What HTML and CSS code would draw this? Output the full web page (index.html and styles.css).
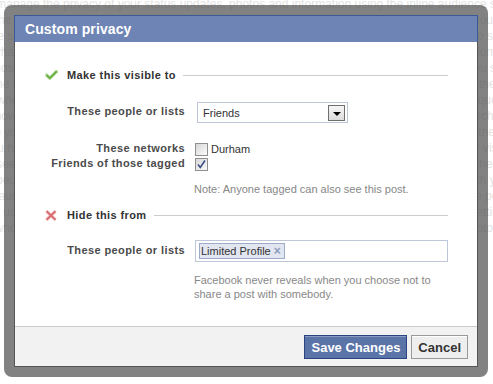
FILE: index.html
```html
<html>

<head>
    <meta http-equiv="Content-Type" content="text/html; charset=utf-8">
    <title>Custom privacy</title>

    <link rel="stylesheet" href="styles.css">
</head>

<body>
    <!-- page behind the dialog -->
    <div class="page">
        <p>You can manage the privacy of your status updates, photos and information using the inline audience selector when you share.</p>
        <p>Choose the people who see the things you share, and change it later for any post on your profile if you care.</p>
        <p>Use these settings to customize who can see each post, and remember that people you tag can also see them.</p>
        <p>Control what gets shared when you connect with applications, games and websites that use your information.</p>
        <p>Your friends can see posts you share with them, and the people you tag may be able to see what you share.</p>
        <p>Review the posts and photos you are tagged in before they appear on your profile and timeline for others.</p>
        <p>Manage who can look you up by email address and phone number, and who can send you friend requests.</p>
        <p>Choose how you connect with the people you know and control what others can see when they search for you.</p>
        <p>Lists help you share with smaller groups of people, and you can change who is on a list at any time there.</p>
        <p>When you hide a post from someone it will not show on their news feed or on your profile when they visit it.</p>
        <p>You can see how your profile looks to the public or to a specific friend using the preview tool above there.</p>
        <p>Blocked people can no longer see things you post on your profile, tag you, or start conversations with you.</p>
        <p>Limit the audience for posts you have shared with friends of friends or the public on your old timeline posts.</p>
        <p>Apps you use may ask for access to your information, and you can remove any of them from your settings page.</p>
        <p>Choose who can post on your profile and who can see what others post on your profile and your photo albums.</p>
    </div>

    <!-- custom privacy dialog -->
    <div class="overlay">
        <div class="dialog">
            <div class="dialog-head">Custom privacy</div>

            <div class="dialog-body">
                <div class="section-title">
                    <svg class="icon" width="13" height="10" viewBox="0 0 13 10">
                        <path d="M1.5 5 L4.8 8.2 L11.8 1.2" fill="none" stroke="#c9e4b4" stroke-width="3.6" stroke-linecap="square"/>
                        <path d="M1.5 5 L4.8 8.2 L11.8 1.2" fill="none" stroke="#6aaf42" stroke-width="2"/>
                    </svg>
                    <span>Make this visible to</span>
                    <i class="rule"></i>
                </div>

                <div class="row row-select">
                    <span class="lbl">These people or lists</span>
                    <div class="select">
                        <span>Friends</span>
                        <span class="select-btn"><i class="caret"></i></span>
                    </div>
                </div>

                <div class="row row-check first">
                    <span class="lbl">These networks</span>
                    <div class="check-line"><span class="cb"></span><span>Durham</span></div>
                </div>
                <div class="row row-check">
                    <span class="lbl">Friends of those tagged</span>
                    <div class="check-line">
                        <span class="cb">
                            <svg width="11" height="11" viewBox="0 0 11 11">
                                <path d="M2 5.5 L4.3 8.5 L9 1.5" fill="none" stroke="#3b4f86" stroke-width="1.6"/>
                            </svg>
                        </span>
                    </div>
                </div>

                <p class="note">Note: Anyone tagged can also see this post.</p>

                <div class="section-title hide">
                    <svg class="icon" width="12" height="11" viewBox="0 0 12 11">
                        <path d="M1.5 1.2 L10.5 9.8 M10.5 1.2 L1.5 9.8" fill="none" stroke="#f4c7c8" stroke-width="3.6"/>
                        <path d="M1.5 1.2 L10.5 9.8 M10.5 1.2 L1.5 9.8" fill="none" stroke="#d6696d" stroke-width="1.8"/>
                    </svg>
                    <span>Hide this from</span>
                    <i class="rule"></i>
                </div>

                <div class="row row-token">
                    <span class="lbl">These people or lists</span>
                    <div class="token-input">
                        <span class="token">Limited Profile<b class="token-x">×</b></span>
                    </div>
                </div>

                <p class="note note-wide">Facebook never reveals when you choose not to share a post with somebody.</p>
            </div>

            <div class="dialog-foot">
                <button class="btn btn-blue">Save Changes</button>
                <button class="btn">Cancel</button>
            </div>
        </div>
    </div>
</body>

</html>
```

FILE: styles.css
```css
body {
    margin: 0;
    width: 493px;
    height: 384px;
    overflow: hidden;
    position: relative;
    background: #fff;
    font-family: "Liberation Sans", Arial, sans-serif;
    font-size: 11px;
    color: #333;
}

/* faded page behind */
.page {
    margin: -4px 0 0 -50px;
    font-size: 12px;
    line-height: 16px;
    color: #e3e3e3;
    white-space: nowrap;
}

.page p {
    margin: 0;
}

.overlay {
    position: absolute;
    left: 4px;
    top: 5px;
    width: 484px;
    height: 372px;
    box-sizing: border-box;
    padding: 10px;
    border-radius: 8px;
    background: rgba(82, 82, 82, .72);
}

.dialog {
    height: 100%;
    box-sizing: border-box;
    border: 1px solid #555;
    background: #fff;
    display: flex;
    flex-direction: column;
}

.dialog-head {
    margin: -1px -1px 0;
    height: 26px;
    line-height: 26px;
    padding-left: 10px;
    border: 1px solid #3b5998;
    border-bottom: 0;
    background: #6d84b4;
    color: #fff;
    font-size: 14px;
    font-weight: bold;
    letter-spacing: .1px;
}

.dialog-body {
    flex: 1;
    padding: 25px 29px 0 30px;
}

.section-title {
    display: flex;
    align-items: center;
    height: 16px;
    font-weight: bold;
    letter-spacing: .4px;
    color: #333;
}

.section-title .icon {
    margin-right: 9px;
}

.section-title.hide {
    margin-top: 11px;
}

.section-title.hide .icon {
    margin-right: 10px;
}

.rule {
    flex: 1;
    height: 1px;
    margin-left: 7px;
    background: #ccc;
}

.row {
    display: grid;
    grid-template-columns: 140px 1fr;
    column-gap: 10px;
    align-items: center;
}

.lbl {
    text-align: right;
    font-weight: bold;
    letter-spacing: .4px;
    color: #4b4b4b;
}

.row-select {
    margin-top: 19px;
}

.row-select .lbl,
.row-token .lbl {
    margin-top: -3px;
}

.select {
    width: 151px;
    height: 21px;
    margin-left: 2px;
    box-sizing: border-box;
    border: 1px solid #bdc7d8;
    padding-left: 5px;
    display: flex;
    align-items: center;
    color: #333;
}

.select-btn {
    margin-left: auto;
    margin-right: 2px;
    width: 17px;
    height: 16px;
    box-sizing: border-box;
    border: 1px solid #6f6f6f;
    background: linear-gradient(#f6f6f6, #dcdcdc);
    display: flex;
    justify-content: center;
    align-items: flex-end;
    padding-bottom: 4px;
}

.caret {
    width: 0;
    height: 0;
    border-top: 4px solid #000;
    border-left: 4px solid transparent;
    border-right: 4px solid transparent;
}

.row-check {
    height: 13px;
    line-height: 13px;
    margin-top: 2px;
}

.row-check .lbl {
    margin-top: -2px;
}

.row-check.first {
    margin-top: 20px;
}

.check-line {
    display: flex;
    align-items: center;
    gap: 3px;
}

.cb {
    width: 13px;
    height: 13px;
    box-sizing: border-box;
    border: 1px solid #8f8f8f;
    background: linear-gradient(135deg, #d8d8d8, #fbfbfb);
    display: flex;
    justify-content: center;
    align-items: center;
}

.note {
    margin: 11px 0 0 149px;
    line-height: 14px;
    color: #888;
}

.note-wide {
    max-width: 250px;
}

.row-token {
    margin-top: 17px;
}

.token-input {
    height: 22px;
    box-sizing: border-box;
    border: 1px solid #bdc7d8;
    padding: 2px 3px;
    display: flex;
    align-items: center;
}

.token {
    height: 16px;
    box-sizing: border-box;
    padding: 0 3px 0 1px;
    border: 1px solid #9dacc9;
    background: #e2e6f0;
    display: inline-flex;
    align-items: center;
    color: #333;
}

.token-x {
    margin-left: 3px;
    color: #8d9bbb;
    font-size: 12px;
}

.dialog-foot {
    border-top: 1px solid #ccc;
    background: #f2f2f2;
    padding: 8px 9px 7px;
    display: flex;
    justify-content: flex-end;
    gap: 4px;
}

.btn {
    height: 24px;
    box-sizing: border-box;
    padding: 0 6px;
    border: 1px solid #999;
    background: #eee;
    box-shadow: inset 0 1px 0 #fff;
    color: #333;
    font-family: "Liberation Sans", Arial, sans-serif;
    font-size: 13px;
    font-weight: bold;
    cursor: pointer;
}

.btn-blue {
    border-color: #29447e;
    background: #5b74a8;
    box-shadow: inset 0 1px 0 #8a9cc2;
    color: #fff;
}
```
